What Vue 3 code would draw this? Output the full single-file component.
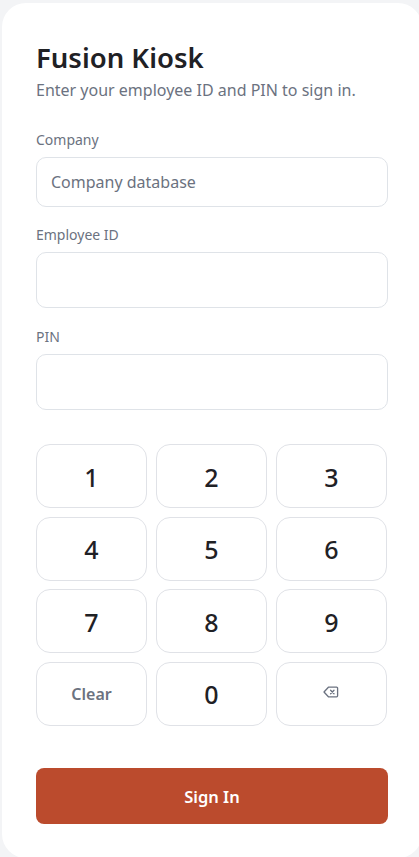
<script setup>
const keys = ['1', '2', '3', '4', '5', '6', '7', '8', '9']
</script>

<template>
  <main class="page">
    <section class="card">
      <h1 class="title">Fusion Kiosk</h1>
      <p class="subtitle">Enter your employee ID and PIN to sign in.</p>
      <form class="form" @submit.prevent>
        <label class="field company">
          <span class="label">Company</span>
          <input class="input short" type="text" placeholder="Company database" />
        </label>
        <label class="field employee">
          <span class="label">Employee ID</span>
          <input class="input" type="text" />
        </label>
        <label class="field pin">
          <span class="label">PIN</span>
          <input class="input" type="password" />
        </label>
        <div class="keypad">
          <button v-for="k in keys" :key="k" type="button" class="key">{{ k }}</button>
          <button type="button" class="key clear">Clear</button>
          <button type="button" class="key">0</button>
          <button type="button" class="key" aria-label="Backspace">
            <svg class="icon" viewBox="0 0 16 16" width="16" height="16" fill="none" stroke="currentColor" stroke-width="1.3" stroke-linejoin="round" stroke-linecap="round">
              <path d="M5.4 3.2H13.6a1 1 0 0 1 1 1v7.6a1 1 0 0 1-1 1H5.4L1 8z" />
              <path d="M7.6 6.2l3.4 3.6M11 6.2L7.6 9.8" />
            </svg>
          </button>
        </div>
        <button type="submit" class="submit">Sign In</button>
      </form>
    </section>
  </main>
</template>

<style>
html, body { margin: 0; background: #f3f4f6; }
</style>

<style scoped>
.page {
  box-sizing: border-box;
  height: 857px;
  padding: 3px 0 0 2px;
  overflow: hidden;
  font-family: "Noto Sans", "Open Sans", sans-serif;
}
.card {
  box-sizing: border-box;
  width: 420px;
  height: 855px;
  padding: 35px 34px 0;
  background: #fff;
  border-radius: 24px;
}
.title {
  margin: 0;
  font-size: 27.5px;
  line-height: 39px;
  font-weight: 600;
  color: #1f2125;
}
.subtitle {
  margin: 0;
  font-size: 16px;
  line-height: 26px;
  color: #6b7280;
}
.form { display: flex; flex-direction: column; }
.field { display: flex; flex-direction: column; }
.company { margin-top: 27px; }
.employee { margin-top: 18px; }
.pin { margin-top: 19px; }
.label {
  font-size: 14px;
  line-height: 20px;
  margin-bottom: 7px;
  color: #6b7280;
}
.input {
  box-sizing: border-box;
  width: 100%;
  height: 56px;
  padding: 0 14px;
  border: 1px solid #dfe3e8;
  border-radius: 10px;
  background: #fff;
  font: inherit;
  font-size: 16px;
  color: #1f2125;
  outline: none;
}
.input.short { height: 50px; }
.input::placeholder { color: #6b7280; opacity: 1; }
.keypad {
  margin-top: 34px;
  margin-right: 1px;
  display: grid;
  grid-template-columns: repeat(3, 1fr);
  grid-auto-rows: 64px;
  gap: 8.5px 9px;
}
.key {
  display: flex;
  align-items: center;
  justify-content: center;
  padding: 1px 0 0;
  border: 1px solid #e0e2e7;
  border-radius: 14px;
  background: #fff;
  font: inherit;
  font-size: 25px;
  font-weight: 500;
  color: #1f2125;
}
.key.clear {
  padding: 0;
  font-size: 16px;
  font-weight: 600;
  color: #6b7280;
}
.icon { color: #6b7280; margin: 0 1px 5px 0; }
.submit {
  margin-top: 42px;
  height: 56px;
  padding: 1px 0 0;
  border: 0;
  border-radius: 8px;
  background: #bb4b2d;
  color: #fff;
  font: inherit;
  font-size: 16.5px;
  font-weight: 600;
}
</style>
